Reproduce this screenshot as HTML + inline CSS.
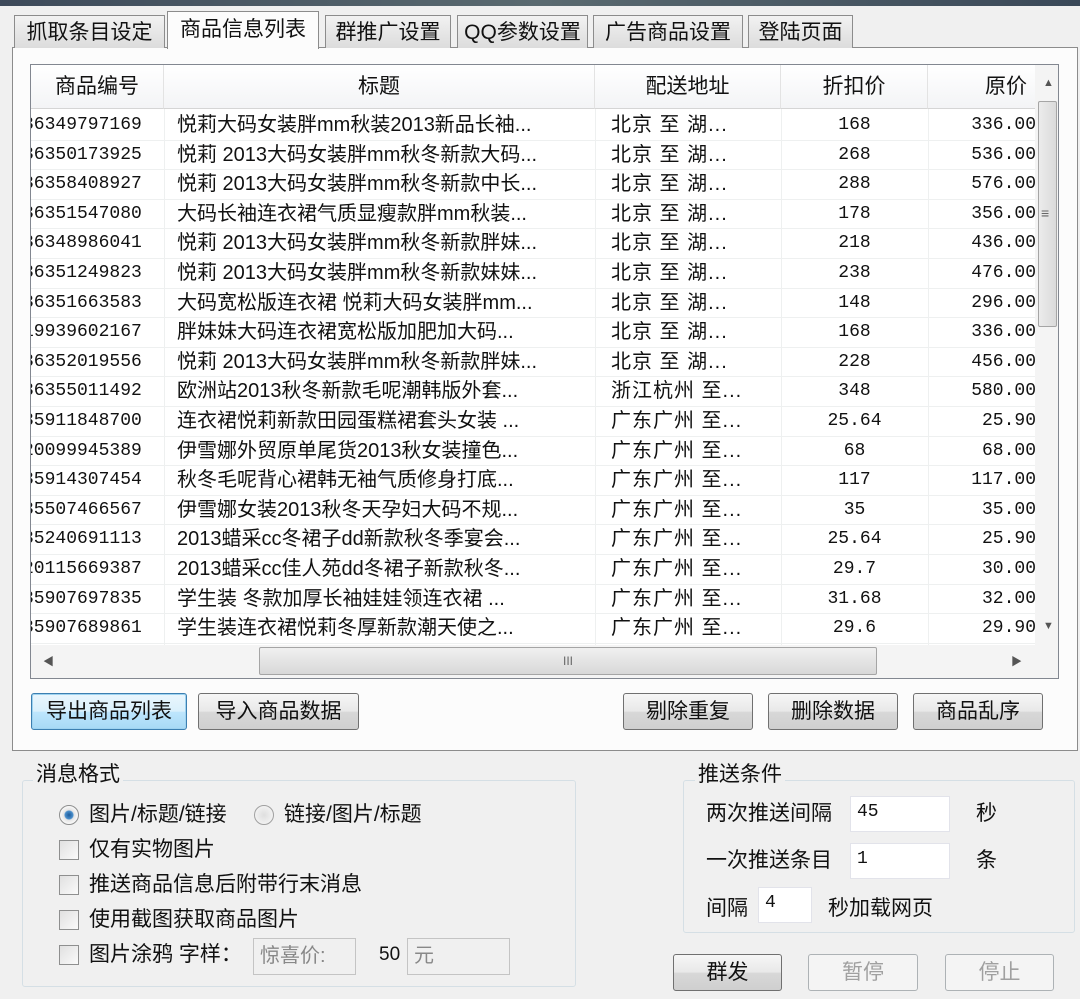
<!DOCTYPE html>
<html><head><meta charset="utf-8"><style>
*{box-sizing:border-box;margin:0;padding:0}
body{width:1080px;height:999px;background:#f0f0f0;position:relative;overflow:hidden;font-family:"Liberation Sans","Noto Sans CJK SC",sans-serif;font-size:20px;color:#111}
.a{position:absolute}
.tab{position:absolute;top:15px;height:33px;border:1px solid #8c8c8c;border-bottom:none;background:linear-gradient(#f2f2f2,#dcdcdc);text-align:center;line-height:33px;font-size:21px}
.panel{position:absolute;left:12px;top:47px;width:1066px;height:704px;border:1px solid #8c8c8c;background:#fcfcfc}
.lv{position:absolute;left:30px;top:64px;width:1029px;height:615px;border:1px solid #828790;background:#fff;overflow:hidden}
.hdr{position:absolute;top:0;height:44px;border-right:1px solid #e3e3e3;border-bottom:1px solid #d5d5d5;background:linear-gradient(#fff,#f3f4f6);line-height:44px;text-align:center;font-size:21px}
.row{position:absolute;left:0;width:1004px;height:29.6px;border-bottom:1px solid #eef0f0;line-height:29px;white-space:nowrap}
.row span{position:absolute;top:0}
.mono{font-family:"Liberation Mono","Noto Sans CJK SC",monospace;font-size:18px}
.btn{position:absolute;height:37px;border:1px solid #707070;border-radius:3px;background:linear-gradient(#f6f6f6 0%,#e8e8e8 50%,#d8d8d8 51%,#cfcfcf 100%);text-align:center;line-height:35px;font-size:21px}
.grp{position:absolute;border:1px solid #d5dfe5;border-radius:3px}
.leg{position:absolute;background:#f0f0f0;padding:0 3px;font-size:21px;line-height:24px}
.cb{position:absolute;width:20px;height:20px;border:1px solid #8e8f8f;background:linear-gradient(135deg,#e0e0e0,#fafafa)}
.lbl{position:absolute;font-size:21px;line-height:26px;white-space:nowrap}
.inp{position:absolute;background:#fff;border:1px solid #e2e3ea;font-size:18px;line-height:30px;padding-left:6px;font-family:"Liberation Mono","Noto Sans CJK SC",monospace}
</style></head><body>
<div class="a" style="left:0;top:0;width:1080px;height:6px;background:linear-gradient(90deg,#3d4a5a,#5a6a70,#3a4858)"></div>
<div class="panel"></div>
<div class="tab" style="left:14px;width:151px">抓取条目设定</div>
<div class="tab" style="left:325px;width:126px">群推广设置</div>
<div class="tab" style="left:457px;width:131px">QQ参数设置</div>
<div class="tab" style="left:593px;width:150px">广告商品设置</div>
<div class="tab" style="left:748px;width:105px">登陆页面</div>
<div class="tab" style="left:167px;top:11px;height:38px;width:152px;background:#fcfcfc;line-height:36px;z-index:2">商品信息列表</div>

<div class="lv">
<div class="hdr" style="left:0;width:133px">商品编号</div>
<div class="hdr" style="left:133px;width:431px">标题</div>
<div class="hdr" style="left:564px;width:186px">配送地址</div>
<div class="hdr" style="left:750px;width:147px">折扣价</div>
<div class="hdr" style="left:897px;width:108px;text-align:right;padding-right:8px">原价</div>
<div id="rows"></div>
<div class="a" style="left:133px;top:44px;width:1px;height:536px;background:#eef0f0"></div>
<div class="a" style="left:564px;top:44px;width:1px;height:536px;background:#eef0f0"></div>
<div class="a" style="left:750px;top:44px;width:1px;height:536px;background:#eef0f0"></div>
<div class="a" style="left:897px;top:44px;width:1px;height:536px;background:#eef0f0"></div>
<!-- vscroll -->
<div class="a" style="left:1004px;top:0;width:24px;height:580px;background:#f4f4f4"></div>
<div class="a" style="left:1012px;top:12px;font-size:11px;color:#555">▲</div>
<div class="a" style="left:1007px;top:36px;width:19px;height:226px;border:1px solid #a5a5a5;border-radius:2px;background:linear-gradient(90deg,#ececec,#dadada)"></div>
<div class="a" style="left:1010px;top:140px;font-size:14px;color:#666">≡</div>
<div class="a" style="left:1012px;top:555px;font-size:11px;color:#555">▼</div>
<!-- hscroll -->
<div class="a" style="left:0;top:580px;width:1029px;height:35px;background:#f4f4f4"></div>
<div class="a" style="left:12px;top:588px;font-size:11px;color:#555">◀</div>
<div class="a" style="left:228px;top:582px;width:618px;height:28px;border:1px solid #a5a5a5;border-radius:2px;background:linear-gradient(#f0f0f0,#d8d8d8);text-align:center;font-size:12px;line-height:26px;color:#666">III</div>
<div class="a" style="left:980px;top:588px;font-size:11px;color:#555">▶</div>
</div>

<div class="btn" style="left:31px;top:693px;width:156px;border-color:#3c7fb1;box-shadow:0 0 0 1px #9fd3f0 inset;background:linear-gradient(#eaf6fd,#d9f0fc 50%,#bee6fd 51%,#a7d9f5)">导出商品列表</div>
<div class="btn" style="left:198px;top:693px;width:161px">导入商品数据</div>
<div class="btn" style="left:623px;top:693px;width:130px">剔除重复</div>
<div class="btn" style="left:768px;top:693px;width:130px">删除数据</div>
<div class="btn" style="left:913px;top:693px;width:130px">商品乱序</div>

<div class="grp" style="left:22px;top:780px;width:554px;height:207px"></div>
<div class="leg" style="left:33px;top:763px">消息格式</div>
<div class="a" style="left:59px;top:805px;width:20px;height:20px;border-radius:50%;border:1px solid #8e8f8f;background:radial-gradient(circle,#1c5a9a 0,#4a8fcc 4px,#e4e4e4 5px,#fafafa 9px)"></div>
<div class="lbl" style="left:89px;top:802px">图片/标题/链接</div>
<div class="a" style="left:254px;top:805px;width:20px;height:20px;border-radius:50%;border:1px solid #a0a0a0;background:radial-gradient(circle,#dedede,#fafafa)"></div>
<div class="lbl" style="left:284px;top:802px">链接/图片/标题</div>
<div class="cb" style="left:59px;top:840px"></div><div class="lbl" style="left:89px;top:837px">仅有实物图片</div>
<div class="cb" style="left:59px;top:875px"></div><div class="lbl" style="left:89px;top:872px">推送商品信息后附带行末消息</div>
<div class="cb" style="left:59px;top:910px"></div><div class="lbl" style="left:89px;top:907px">使用截图获取商品图片</div>
<div class="cb" style="left:59px;top:945px"></div><div class="lbl" style="left:89px;top:942px">图片涂鸦 字样：</div>
<div class="inp" style="left:253px;top:938px;width:103px;height:37px;border-color:#c4c4c4;background:#f0f0f0;color:#888;font-family:'Liberation Sans','Noto Sans CJK SC',sans-serif;font-size:20px;line-height:34px">惊喜价:</div>
<div class="lbl" style="left:379px;top:942px;font-size:19px">50</div>
<div class="inp" style="left:407px;top:938px;width:103px;height:37px;border-color:#c4c4c4;background:#f0f0f0;color:#888;font-family:'Liberation Sans','Noto Sans CJK SC',sans-serif;font-size:20px;line-height:34px">元</div>

<div class="grp" style="left:683px;top:780px;width:392px;height:153px"></div>
<div class="leg" style="left:695px;top:763px">推送条件</div>
<div class="lbl" style="left:706px;top:801px">两次推送间隔</div>
<div class="inp" style="left:850px;top:796px;width:100px;height:36px">45</div>
<div class="lbl" style="left:976px;top:801px">秒</div>
<div class="lbl" style="left:706px;top:848px">一次推送条目</div>
<div class="inp" style="left:850px;top:843px;width:100px;height:36px">1</div>
<div class="lbl" style="left:976px;top:848px">条</div>
<div class="lbl" style="left:706px;top:896px">间隔</div>
<div class="inp" style="left:758px;top:887px;width:54px;height:36px">4</div>
<div class="lbl" style="left:828px;top:896px">秒加载网页</div>

<div class="btn" style="left:673px;top:954px;width:109px">群发</div>
<div class="btn" style="left:808px;top:954px;width:110px;border-color:#adb2b5;background:#f4f4f4;color:#a0a0a0">暂停</div>
<div class="btn" style="left:945px;top:954px;width:109px;border-color:#adb2b5;background:#f4f4f4;color:#a0a0a0">停止</div>

<script>
var d=[
["36349797169"," 悦莉大码女装胖mm秋装2013新品长袖...","北京 至 湖...","168","336.00"],
["36350173925","悦莉 2013大码女装胖mm秋冬新款大码...","北京 至 湖...","268","536.00"],
["36358408927","悦莉 2013大码女装胖mm秋冬新款中长...","北京 至 湖...","288","576.00"],
["36351547080"," 大码长袖连衣裙气质显瘦款胖mm秋装...","北京 至 湖...","178","356.00"],
["36348986041","悦莉 2013大码女装胖mm秋冬新款胖妹...","北京 至 湖...","218","436.00"],
["36351249823","悦莉 2013大码女装胖mm秋冬新款妹妹...","北京 至 湖...","238","476.00"],
["36351663583","大码宽松版连衣裙 悦莉大码女装胖mm...","北京 至 湖...","148","296.00"],
["19939602167"," 胖妹妹大码连衣裙宽松版加肥加大码...","北京 至 湖...","168","336.00"],
["36352019556","悦莉 2013大码女装胖mm秋冬新款胖妹...","北京 至 湖...","228","456.00"],
["36355011492"," 欧洲站2013秋冬新款毛呢潮韩版外套...","浙江杭州 至...","348","580.00"],
["35911848700","连衣裙悦莉新款田园蛋糕裙套头女装 ...","广东广州 至...","25.64","25.90"],
["20099945389"," 伊雪娜外贸原单尾货2013秋女装撞色...","广东广州 至...","68","68.00"],
["35914307454"," 秋冬毛呢背心裙韩无袖气质修身打底...","广东广州 至...","117","117.00"],
["35507466567"," 伊雪娜女装2013秋冬天孕妇大码不规...","广东广州 至...","35","35.00"],
["35240691113"," 2013蜡采cc冬裙子dd新款秋冬季宴会...","广东广州 至...","25.64","25.90"],
["20115669387"," 2013蜡采cc佳人苑dd冬裙子新款秋冬...","广东广州 至...","29.7","30.00"],
["35907697835"," 学生装 冬款加厚长袖娃娃领连衣裙 ...","广东广州 至...","31.68","32.00"],
["35907689861"," 学生装连衣裙悦莉冬厚新款潮天使之...","广东广州 至...","29.6","29.90"]];
var h="";
d.forEach(function(r,i){
h+='<div class="row" style="top:'+(46+i*29.6)+'px">'+
'<span class="mono" style="left:-8px">'+r[0]+'</span>'+
'<span style="left:146px">'+r[1]+'</span>'+
'<span style="left:580px;letter-spacing:1px">'+r[2]+'</span>'+
'<span class="mono" style="left:750px;width:147px;text-align:center">'+r[3]+'</span>'+
'<span class="mono" style="left:897px;width:108px;text-align:right;overflow:hidden;white-space:nowrap">'+r[4]+'</span></div>';
});
document.getElementById("rows").innerHTML=h;
</script>
</body></html>
